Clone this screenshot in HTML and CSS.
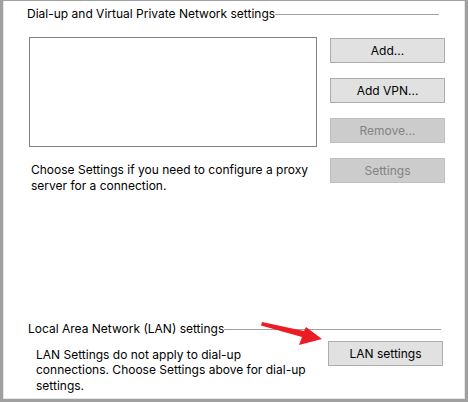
FILE: index.html
```html
<!DOCTYPE html>
<html lang="en">
  <head>
    <meta charset="UTF-8" />
    <title>Connections</title>
    <link rel="stylesheet" href="styles.css">
  </head>
  <body>
    <div class="window">
      <div class="group-title dialup-title">Dial-up and Virtual Private Network settings</div>

      <div class="dialup">
        <div class="dialup-left">
          <div class="conn-list"></div>
          <p class="note">
            Choose Settings if you need to configure a proxy<br>
            server for a connection.
          </p>
        </div>
        <div class="buttons">
          <button class="btn">Add...</button>
          <button class="btn">Add VPN...</button>
          <button class="btn" disabled>Remove...</button>
          <button class="btn" disabled>Settings</button>
        </div>
      </div>

      <div class="lan">
        <div class="group-title lan-title">Local Area Network (LAN) settings</div>
        <div class="lan-row">
          <p class="note lan-note">
            LAN Settings do not apply to dial-up<br>
            connections. Choose Settings above for dial-up<br>
            settings.
          </p>
          <button class="btn">LAN settings</button>
        </div>
      </div>

      <!-- red pointer drawn over the dialog -->
      <svg class="pointer" width="468" height="402" viewBox="0 0 468 402">
        <polygon fill="#ec1c24" points="262,322 304,331 306,327 322,339 299,345 302,337 261,325.5" />
      </svg>
    </div>
  </body>
</html>
```
FILE: styles.css
```css
* {
  margin: 0;
  padding: 0;
  box-sizing: border-box;
}

body {
  font-family: Inter, "Noto Sans", sans-serif;
  font-size: 12px;
  color: #000;
  background: #fff;
}

.window {
  position: relative;
  height: 402px;
  border: 3px solid #a0a0a0;
  border-top-width: 1px;
  box-shadow: inset 1px 0 0 #e6e6e6, inset -1px -1px 0 #e6e6e6;
  padding: 5px 0 6px 0;
  display: flex;
  flex-direction: column;
}

.group-title {
  display: flex;
  align-items: center;
  line-height: 16px;
  white-space: nowrap;
}

.group-title::after {
  content: "";
  flex: 1;
  border-top: 1px solid #a0a0a0;
  margin-top: 1px;
}

.dialup-title {
  margin: 0 26px 0 24px;
}

.lan-title {
  margin: 0 24px 0 25px;
}

.dialup {
  display: grid;
  grid-template-columns: 288px 115px;
  column-gap: 13px;
  margin: 15px 0 0 26px;
}

.conn-list {
  height: 110px;
  border: 1px solid #828282;
  background: #fff;
}

.note {
  line-height: 15.5px;
  white-space: nowrap;
}

.dialup-left .note {
  margin-top: 15px;
  padding-left: 2px;
}

.buttons {
  display: flex;
  flex-direction: column;
  gap: 15px;
  padding-top: 1px;
}

.btn {
  height: 25px;
  font-family: inherit;
  font-size: 12px;
  color: #000;
  background: #e1e1e1;
  border: 1px solid #adadad;
  border-radius: 0;
}

.btn:disabled {
  color: #838383;
  background: #cccccc;
  border-color: #bfbfbf;
}

.lan {
  margin-top: auto;
}

.lan-row {
  display: grid;
  grid-template-columns: 292px 115px;
  margin: 4px 0 0 33px;
}

.lan-note {
  margin-top: 6px;
}

.pointer {
  position: absolute;
  top: -1px;
  left: -3px;
  pointer-events: none;
}
```
